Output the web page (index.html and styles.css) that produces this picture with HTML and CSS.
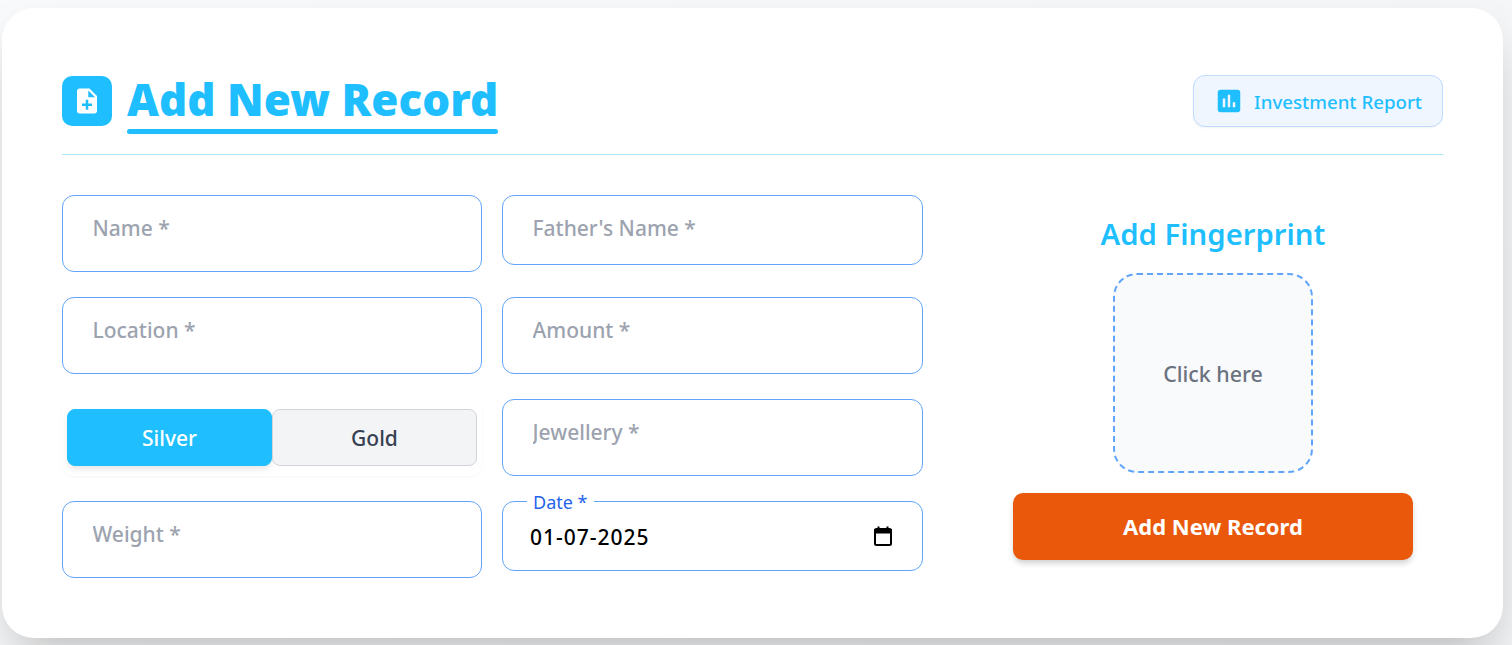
FILE: index.html
```html
<!DOCTYPE html>
<html>
<head>
    <title>Add New Record</title>
    <link rel="stylesheet" href="styles.css">
</head>
<body>

<div class="card">
    <div class="header">
        <div class="title-wrap">
            <span class="title-icon">
                <svg width="30" height="30" viewBox="0 0 24 24" fill="#fff"><path d="M14 2H6c-1.1 0-1.99.9-1.99 2L4 20c0 1.1.89 2 1.99 2H18c1.1 0 2-.9 2-2V8l-6-6zm2 14h-3v3h-2v-3H8v-2h3v-3h2v3h3v2zm-3-7V3.5L18.5 9H13z"/></svg>
            </span>
            <h1 class="title">Add New Record</h1>
        </div>
        <button class="report-btn">
            <svg width="30" height="30" viewBox="0 0 24 24" fill="#1fbfff"><path d="M19 3H5c-1.1 0-2 .9-2 2v14c0 1.1.9 2 2 2h14c1.1 0 2-.9 2-2V5c0-1.1-.9-2-2-2zM9 17H7v-7h2v7zm4 0h-2V7h2v10zm4 0h-2v-4h2v4z"/></svg>
            <span class="report-text">Investment Report</span>
        </button>
    </div>

    <div class="content">
        <div class="form-grid">
            <input class="field" type="text" placeholder="Name *">
            <input class="field short" type="text" placeholder="Father's Name *">
            <input class="field" type="text" placeholder="Location *">
            <input class="field" type="text" placeholder="Amount *">
            <div class="toggle">
                <button class="toggle-btn active">Silver</button>
                <button class="toggle-btn">Gold</button>
            </div>
            <input class="field" type="text" placeholder="Jewellery *">
            <input class="field" type="text" placeholder="Weight *">
            <div class="date-field">
                <label class="date-label">Date *</label>
                <span class="date-value">01-07-2025</span>
                <svg width="24" height="24" viewBox="0 0 24 24" fill="none"><rect x="4" y="5" width="16" height="16" rx="1.500" stroke="#000" stroke-width="2"/><path d="M3 5h18v4.500H3zM6.500 2.500h2V5h-2zM15.500 2.500h2V5h-2z" fill="#000"/></svg>
            </div>
        </div>

        <div class="side">
            <h2 class="side-title">Add Fingerprint</h2>
            <div class="finger-box">Click here</div>
            <button class="submit-btn">Add New Record</button>
        </div>
    </div>
</div>

</body>
</html>
```

FILE: styles.css
```css
* { box-sizing: border-box; }
html, body { height: 100%; }
body {
    margin: 0; padding: 8px 9px 0 2px; overflow: hidden;
    background: linear-gradient(135deg, #f9fafb, #f3f4f6);
    font-family: "Noto Sans", Arial, sans-serif;
}
button, input { font-family: inherit; }

.card {
    height: 630px; padding: 68px 60px 0;
    background: white; border-radius: 32px;
    box-shadow: 0 25px 50px -12px rgba(0,0,0,0.25);
}

.header {
    display: flex; justify-content: space-between; align-items: flex-start;
    height: 79px; border-bottom: 1px solid #a8e6fb;
}
.title-wrap { display: flex; gap: 15px; }
.title-icon {
    width: 50px; height: 50px; border-radius: 10px; background: #1fbfff;
    display: flex; align-items: center; justify-content: center;
}
.title {
    margin: 0; font-size: 44px; line-height: 47px; font-weight: 900; color: #1fbfff;
}
.title::after {
    content: ""; display: block; height: 5px; margin-top: 6px;
    background: #1fbfff; border-radius: 3px;
}
.report-btn {
    display: flex; align-items: center; gap: 10px;
    height: 52px; margin-top: -1px; padding: 0 20px;
    background: #eff6ff; border: 1px solid #bfdbfe; border-radius: 12px;
    color: #1fbfff; font-size: 18.700px; font-weight: 500;
    box-shadow: 0 1px 2px rgba(0,0,0,0.05);
}
.report-text { margin-top: 1px; }

.content { display: flex; gap: 60px; margin-top: 40px; }
.form-grid {
    width: 861px; display: grid; grid-template-columns: 420px 421px;
    grid-auto-rows: 77px; column-gap: 20px; row-gap: 25px; align-items: start;
}
.field {
    width: 100%; padding: 17px 30px 28px 29.500px; line-height: 30px;
    border: 1px solid #60a5fa; border-radius: 12px; outline: none;
    font-size: 21px; font-weight: 500;
}
.field.short { padding-bottom: 21px; }
.field::placeholder { color: #9ca3af; opacity: 1; }

.toggle {
    display: flex; height: 77px; padding: 10px 5px;
    background: white; border-radius: 12px;
    box-shadow: 0 1px 3px rgba(0,0,0,0.04);
}
.toggle-btn {
    flex: 1; background: #f3f4f6; color: #374151;
    border: 1px solid #d1d5db; border-radius: 8px;
    font-size: 21px; font-weight: 500;
}
.toggle-btn.active {
    background: #1fbfff; color: white; border-color: #1fbfff;
    box-shadow: 0 4px 6px -1px rgba(0,0,0,0.1);
}

.date-field {
    position: relative; height: 70px; padding: 0 27px;
    display: flex; align-items: center; justify-content: space-between;
    border: 1px solid #60a5fa; border-radius: 12px;
}
.date-label {
    position: absolute; top: -11px; left: 24px; padding: 0 6px;
    background: white; color: #2563eb; font-size: 18px; line-height: 22px;
}
.date-value { font-size: 21px; font-weight: 500; letter-spacing: 1px; color: #000; margin-top: 2px; }

.side { flex: 1; display: flex; flex-direction: column; align-items: center; justify-content: center; height: 383px; }
.side-title { margin: 0 0 18px; font-size: 29.300px; line-height: 42px; font-weight: 600; color: #1fbfff; }
.finger-box {
    width: 200px; height: 200px; padding-top: 1px; display: flex; align-items: center; justify-content: center;
    background: #f9fafb; border: 2px dashed #60a5fa; border-radius: 24px;
    color: #6b7280; font-size: 21.400px; font-weight: 500;
}
.submit-btn {
    width: 400px; height: 67px; margin-top: 20px; padding-bottom: 3px;
    background: #ea580c; color: white; border: none; border-radius: 10px;
    font-size: 22px; font-weight: 700;
    box-shadow: 0 4px 6px -1px rgba(0,0,0,0.2);
}
```
